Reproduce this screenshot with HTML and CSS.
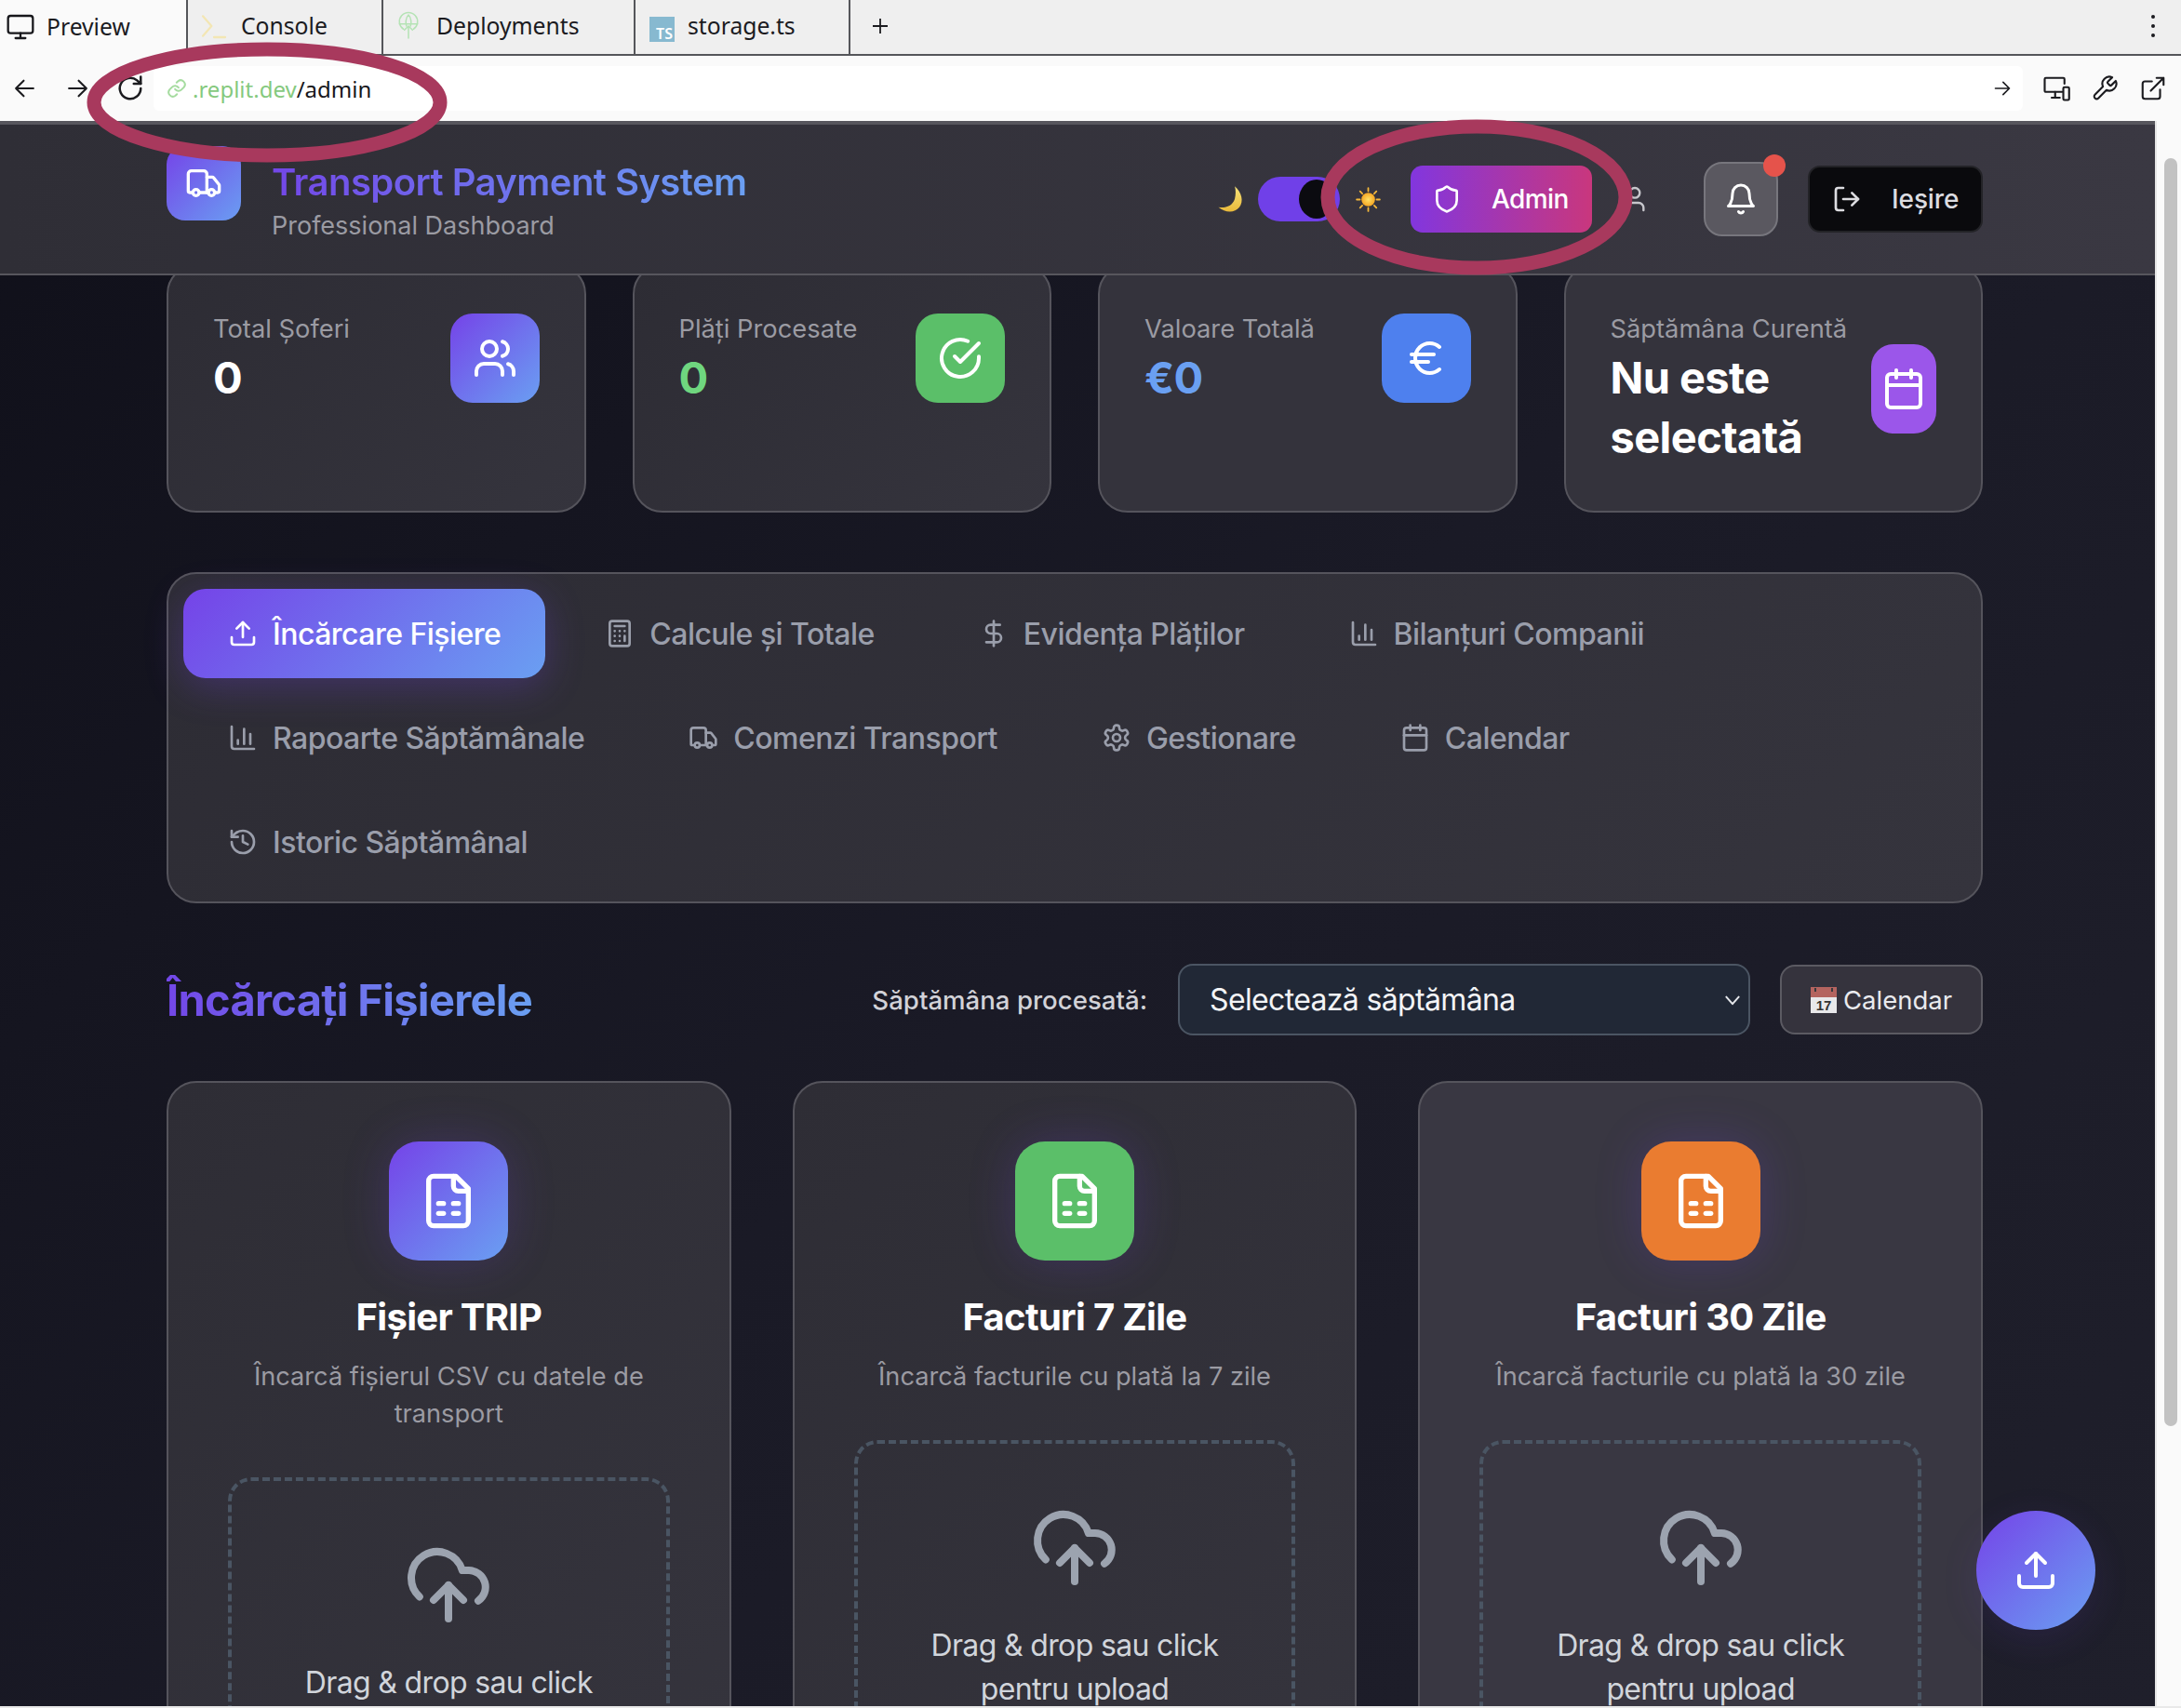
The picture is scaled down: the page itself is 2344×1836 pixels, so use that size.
FILE: index.html
```html
<!DOCTYPE html>
<html lang="ro">
<head>
<meta charset="utf-8">
<title>Transport Payment System</title>
<link rel="stylesheet" href="styles.css">
</head>
<body>
<svg class="sprite" width="0" height="0" aria-hidden="true">
  <symbol id="i-truck" viewBox="0 0 24 24"><path d="M14 18V6a2 2 0 0 0-2-2H4a2 2 0 0 0-2 2v11a1 1 0 0 0 1 1h2"/><path d="M15 18H9"/><path d="M19 18h2a1 1 0 0 0 1-1v-3.65a1 1 0 0 0-.22-.624l-3.48-4.35A1 1 0 0 0 17.52 8H14"/><circle cx="17" cy="18" r="2"/><circle cx="7" cy="18" r="2"/></symbol>
  <symbol id="i-upload" viewBox="0 0 24 24"><path d="M21 15v4a2 2 0 0 1-2 2H5a2 2 0 0 1-2-2v-4"/><polyline points="17 8 12 3 7 8"/><line x1="12" y1="3" x2="12" y2="15"/></symbol>
  <symbol id="i-calc" viewBox="0 0 24 24"><rect x="4" y="2" width="16" height="20" rx="2"/><line x1="8" y1="6" x2="16" y2="6"/><line x1="16" y1="14" x2="16" y2="18"/><path d="M16 10h.01M12 10h.01M8 10h.01M12 14h.01M8 14h.01M12 18h.01M8 18h.01"/></symbol>
  <symbol id="i-dollar" viewBox="0 0 24 24"><line x1="12" y1="2" x2="12" y2="22"/><path d="M17 5H9.5a3.5 3.5 0 0 0 0 7h5a3.5 3.5 0 0 1 0 7H6"/></symbol>
  <symbol id="i-chart" viewBox="0 0 24 24"><path d="M3 3v16a2 2 0 0 0 2 2h16"/><path d="M18 17V9"/><path d="M13 17V5"/><path d="M8 17v-3"/></symbol>
  <symbol id="i-gear" viewBox="0 0 24 24"><path d="M12.22 2h-.44a2 2 0 0 0-2 2v.18a2 2 0 0 1-1 1.73l-.43.25a2 2 0 0 1-2 0l-.15-.08a2 2 0 0 0-2.73.73l-.22.38a2 2 0 0 0 .73 2.73l.15.1a2 2 0 0 1 1 1.72v.51a2 2 0 0 1-1 1.74l-.15.09a2 2 0 0 0-.73 2.73l.22.38a2 2 0 0 0 2.73.73l.15-.08a2 2 0 0 1 2 0l.43.25a2 2 0 0 1 1 1.73V20a2 2 0 0 0 2 2h.44a2 2 0 0 0 2-2v-.18a2 2 0 0 1 1-1.73l.43-.25a2 2 0 0 1 2 0l.15.08a2 2 0 0 0 2.73-.73l.22-.39a2 2 0 0 0-.73-2.73l-.15-.08a2 2 0 0 1-1-1.74v-.5a2 2 0 0 1 1-1.74l.15-.09a2 2 0 0 0 .73-2.73l-.22-.38a2 2 0 0 0-2.73-.73l-.15.08a2 2 0 0 1-2 0l-.43-.25a2 2 0 0 1-1-1.73V4a2 2 0 0 0-2-2z"/><circle cx="12" cy="12" r="3"/></symbol>
  <symbol id="i-cal" viewBox="0 0 24 24"><path d="M8 2v4"/><path d="M16 2v4"/><rect x="3" y="4" width="18" height="18" rx="2"/><path d="M3 10h18"/></symbol>
  <symbol id="i-history" viewBox="0 0 24 24"><path d="M3 12a9 9 0 1 0 9-9 9.75 9.75 0 0 0-6.74 2.74L3 8"/><path d="M3 3v5h5"/><path d="M12 7v5l4 2"/></symbol>
  <symbol id="i-file" viewBox="0 0 24 24"><path d="M15 2H6a2 2 0 0 0-2 2v16a2 2 0 0 0 2 2h12a2 2 0 0 0 2-2V7Z"/><path d="M14 2v4a2 2 0 0 0 2 2h4"/><path d="M8 13h2"/><path d="M14 13h2"/><path d="M8 17h2"/><path d="M14 17h2"/></symbol>
  <symbol id="i-cloud" viewBox="0 0 24 24"><path d="M4.2 15.1A7 7 0 1 1 15.71 8h1.79a4.5 4.5 0 0 1 2.5 8.2"/><path d="M12 12v9"/><path d="m16 16-4-4-4 4"/></symbol>
</svg>

<div class="tabbar">
  <div class="tab tab-active">
    <svg class="tab-ico" viewBox="0 0 24 24"><rect x="2" y="3" width="20" height="14" rx="2"/><path d="M8 21h8M12 17v4"/></svg>
    <span>Preview</span>
  </div>
  <div class="tab tab-console">
    <svg class="tab-ico ico-pale-y" viewBox="0 0 24 24"><path d="m3 4 7 8-7 8"/><path d="M12 21h9"/></svg>
    <span>Console</span>
  </div>
  <div class="tab tab-deploy">
    <svg class="tab-ico ico-pale-g" viewBox="0 0 24 24"><path d="M7 15a9 9 0 1 1 10 0"/><path d="M3 10h18M12 1c-3 3-3 8-2 11M12 1c3 3 3 8 2 11"/><path d="M12 24V12M8 16l4-4 4 4"/></svg>
    <span>Deployments</span>
  </div>
  <div class="tab tab-storage">
    <span class="ts-badge">TS</span>
    <span>storage.ts</span>
  </div>
  <div class="tab-plus">
    <svg class="plus-ico" viewBox="0 0 24 24"><path d="M12 4v16M4 12h16"/></svg>
  </div>
  <div class="tab-spacer"></div>
  <div class="tab-more"><i></i><i></i><i></i></div>
</div>

<div class="addrbar">
  <svg class="nav-ico" viewBox="0 0 24 24"><path d="M21 12H3M11 4l-8 8 8 8"/></svg>
  <svg class="nav-ico" viewBox="0 0 24 24"><path d="M3 12h18M13 4l8 8-8 8"/></svg>
  <svg class="nav-ico nav-reload" viewBox="0 0 24 24"><path d="M21 12a9 9 0 1 1-3.2-6.9L21 8"/><path d="M21 2v6h-6"/></svg>
  <div class="urlfield">
    <svg class="link-ico" viewBox="0 0 24 24"><path d="M10 13a5 5 0 0 0 7.5.5l3-3a5 5 0 0 0-7-7l-1.700 1.700"/><path d="M14 11a5 5 0 0 0-7.500-.5l-3 3a5 5 0 0 0 7 7l1.700-1.700"/></svg>
    <span class="url"><span class="url-host">.replit.dev</span>/admin</span>
    <span class="url-spacer"></span>
    <svg class="go-ico" viewBox="0 0 24 24"><path d="M3 12h18M13 4l8 8-8 8"/></svg>
  </div>
  <svg class="tool-ico" viewBox="0 0 24 24"><path d="M17 15H3a1 1 0 0 1-1-1V4a1 1 0 0 1 1-1h15a1 1 0 0 1 1 1v4"/><path d="M8 20h7M11 15v5"/><rect x="18" y="11" width="5" height="11" rx="1"/></svg>
  <svg class="tool-ico" viewBox="0 0 24 24"><path d="M14.700 6.300a1 1 0 0 0 0 1.400l1.600 1.600a1 1 0 0 0 1.400 0l3.770-3.770a6 6 0 0 1-7.940 7.940l-6.910 6.910a2.120 2.120 0 0 1-3-3l6.910-6.910a6 6 0 0 1 7.940-7.940l-3.760 3.760z"/></svg>
  <svg class="tool-ico" viewBox="0 0 24 24"><path d="M18 13v6a2 2 0 0 1-2 2H5a2 2 0 0 1-2-2V8a2 2 0 0 1 2-2h6"/><path d="M15 3h6v6M10 14 21 3"/></svg>
</div>

<div class="app">
  <div class="page">
    <header class="head">
      <div class="brand">
        <div class="logo"><svg class="lu lu-logo"><use href="#i-truck"/></svg></div>
        <div class="brand-text">
          <div class="brand-title">Transport Payment System</div>
          <div class="brand-sub">Professional Dashboard</div>
        </div>
      </div>
      <div class="head-actions">
        <svg class="moon" viewBox="0 0 24 24"><defs><linearGradient id="mg" x1="0" y1="0" x2="0" y2="1"><stop offset="0" stop-color="#f7e27a"/><stop offset="1" stop-color="#e9b93a"/></linearGradient></defs><path d="M16 1C22 6 24 14 20 19C16 24 8 24 2 19C8 20 14 18 16 12C17 8 17 4 16 1Z" fill="url(#mg)"/></svg>
        <div class="toggle"><span class="knob"></span></div>
        <svg class="sun" viewBox="0 0 24 24"><defs><radialGradient id="sg"><stop offset="0" stop-color="#ffe066"/><stop offset="1" stop-color="#f5a623"/></radialGradient></defs><circle cx="12" cy="12" r="6.500" fill="url(#sg)"/><path d="M12 1v3M12 20v3M1 12h3M20 12h3M4.200 4.200l2.100 2.100M17.700 17.700l2.100 2.100M4.200 19.800l2.100-2.100M17.700 6.300l2.100-2.100" stroke="#f5b83a" stroke-width="1.600" stroke-linecap="round"/></svg>
        <button class="btn-admin">
          <svg class="lu lu-btn" viewBox="0 0 24 24"><path d="M20 13c0 5-3.500 7.500-7.660 8.950a1 1 0 0 1-.67-.01C7.500 20.500 4 18 4 13V6a1 1 0 0 1 1-1c2 0 4.500-1.200 6.240-2.720a1.170 1.170 0 0 1 1.520 0C14.510 3.810 17 5 19 5a1 1 0 0 1 1 1z"/></svg>
          <span>Admin</span>
        </button>
        <svg class="lu lu-user" viewBox="0 0 24 24"><path d="M19 21v-2a4 4 0 0 0-4-4H9a4 4 0 0 0-4 4v2"/><circle cx="12" cy="7" r="4"/></svg>
        <div class="bell">
          <svg class="lu lu-bell" viewBox="0 0 24 24"><path d="M6 8a6 6 0 0 1 12 0c0 7 3 9 3 9H3s3-2 3-9"/><path d="M10.300 21a1.940 1.940 0 0 0 3.400 0"/></svg>
          <span class="bell-dot"></span>
        </div>
        <button class="btn-exit">
          <svg class="lu lu-btn" viewBox="0 0 24 24"><path d="M9 21H5a2 2 0 0 1-2-2V5a2 2 0 0 1 2-2h4"/><polyline points="16 17 21 12 16 7"/><line x1="21" y1="12" x2="9" y2="12"/></svg>
          <span>Ieșire</span>
        </button>
      </div>
    </header>

    <main class="content">
      <section class="stats">
        <div class="stat">
          <div class="stat-text"><div class="stat-label">Total Șoferi</div><div class="stat-value">0</div></div>
          <div class="stat-ico grad-brand"><svg class="lu lu-stat" viewBox="0 0 24 24"><path d="M16 21v-2a4 4 0 0 0-4-4H6a4 4 0 0 0-4 4v2"/><circle cx="9" cy="7" r="4"/><path d="M22 21v-2a4 4 0 0 0-3-3.870"/><path d="M16 3.130a4 4 0 0 1 0 7.750"/></svg></div>
        </div>
        <div class="stat">
          <div class="stat-text"><div class="stat-label">Plăți Procesate</div><div class="stat-value val-green">0</div></div>
          <div class="stat-ico bg-green"><svg class="lu lu-stat" viewBox="0 0 24 24"><path d="M22 11.080V12a10 10 0 1 1-5.930-9.140"/><path d="m9 11 3 3L22 4"/></svg></div>
        </div>
        <div class="stat">
          <div class="stat-text"><div class="stat-label">Valoare Totală</div><div class="stat-value val-blue">€0</div></div>
          <div class="stat-ico bg-blue"><svg class="lu lu-stat" viewBox="0 0 24 24"><path d="M4 10h12"/><path d="M4 14h9"/><path d="M19 6a7.700 7.700 0 0 0-5.200-2A7.900 7.900 0 0 0 6 12c0 4.400 3.500 8 7.800 8 2 0 3.800-.8 5.200-2"/></svg></div>
        </div>
        <div class="stat">
          <div class="stat-text"><div class="stat-label">Săptămâna Curentă</div><div class="stat-value">Nu este selectată</div></div>
          <div class="stat-ico bg-purple"><svg class="lu lu-stat"><use href="#i-cal"/></svg></div>
        </div>
      </section>

      <nav class="tabs">
        <a class="navtab navtab-active"><svg class="lu lu-nav"><use href="#i-upload"/></svg><span class="navtxt">Încărcare Fișiere</span></a>
        <a class="navtab"><svg class="lu lu-nav"><use href="#i-calc"/></svg><span class="navtxt">Calcule și Totale</span></a>
        <a class="navtab"><svg class="lu lu-nav"><use href="#i-dollar"/></svg><span class="navtxt">Evidența Plăților</span></a>
        <a class="navtab"><svg class="lu lu-nav"><use href="#i-chart"/></svg><span class="navtxt">Bilanțuri Companii</span></a>
        <a class="navtab"><svg class="lu lu-nav"><use href="#i-chart"/></svg><span class="navtxt">Rapoarte Săptămânale</span></a>
        <a class="navtab"><svg class="lu lu-nav"><use href="#i-truck"/></svg><span class="navtxt">Comenzi Transport</span></a>
        <a class="navtab"><svg class="lu lu-nav"><use href="#i-gear"/></svg><span class="navtxt">Gestionare</span></a>
        <a class="navtab"><svg class="lu lu-nav"><use href="#i-cal"/></svg><span class="navtxt">Calendar</span></a>
        <a class="navtab"><svg class="lu lu-nav"><use href="#i-history"/></svg><span class="navtxt">Istoric Săptămânal</span></a>
      </nav>

      <section class="sec-head">
        <h2 class="sec-title">Încărcați Fișierele</h2>
        <div class="sec-spacer"></div>
        <span class="sec-label">Săptămâna procesată:</span>
        <div class="select"><span>Selectează săptămâna</span><svg class="chev" viewBox="0 0 24 24"><path d="m4 8 8 9 8-9"/></svg></div>
        <button class="btn-cal">
          <svg class="emoji-cal" viewBox="0 0 28 28"><rect x="0" y="0" width="28" height="28" fill="#e8e8ea"/><rect x="0" y="0" width="28" height="11" fill="#b4645f"/><path d="M5 1v4M23 1v4" stroke="#3a3a3e" stroke-width="2"/><text x="14" y="25" text-anchor="middle" class="emoji-cal-num">17</text></svg>
          <span>Calendar</span>
        </button>
      </section>

      <section class="uploads">
        <article class="ucard">
          <div class="uico grad-brand uglow"><svg class="lu lu-file"><use href="#i-file"/></svg></div>
          <h3 class="utitle">Fișier TRIP</h3>
          <p class="udesc">Încarcă fișierul CSV cu datele de transport</p>
          <div class="drop"><svg class="lu lu-cloud"><use href="#i-cloud"/></svg><div class="droptxt">Drag &amp; drop sau click<br>pentru upload</div></div>
        </article>
        <article class="ucard">
          <div class="uico bg-green uglow"><svg class="lu lu-file"><use href="#i-file"/></svg></div>
          <h3 class="utitle">Facturi 7 Zile</h3>
          <p class="udesc">Încarcă facturile cu plată la 7 zile</p>
          <div class="drop"><svg class="lu lu-cloud"><use href="#i-cloud"/></svg><div class="droptxt">Drag &amp; drop sau click<br>pentru upload</div></div>
        </article>
        <article class="ucard">
          <div class="uico bg-orange uglow"><svg class="lu lu-file"><use href="#i-file"/></svg></div>
          <h3 class="utitle">Facturi 30 Zile</h3>
          <p class="udesc">Încarcă facturile cu plată la 30 zile</p>
          <div class="drop"><svg class="lu lu-cloud"><use href="#i-cloud"/></svg><div class="droptxt">Drag &amp; drop sau click<br>pentru upload</div></div>
        </article>
      </section>
    </main>

    <div class="fab"><svg class="lu lu-fab"><use href="#i-upload"/></svg></div>
  </div>
  <div class="scrollbar"><div class="thumb"></div></div>
</div>
<div class="bottom-strip"></div>

<svg class="marks" viewBox="0 0 2344 1836" aria-hidden="true">
  <ellipse cx="287" cy="110" rx="186" ry="57"/>
  <ellipse cx="1587" cy="212" rx="160" ry="76"/>
</svg>
</body>
</html>
```

FILE: styles.css
```css
* { box-sizing: border-box; }
html, body { margin: 0; height: 100%; }
body {
  width: 2344px; height: 1836px; overflow: hidden; position: relative;
  display: flex; flex-direction: column;
  font-family: "Inter", "Liberation Sans", sans-serif; background: #fff;
}
.sprite { position: absolute; }
.lu { fill: none; stroke: currentColor; stroke-width: 2; stroke-linecap: round; stroke-linejoin: round; flex: none; display: block; }

/* IDE tab bar */
.tabbar { height: 60px; flex: none; display: flex; align-items: stretch; background: #efefef; border-bottom: 2px solid #55565a; font-family: "Noto Sans", sans-serif; font-size: 24.700px; line-height: 54px; color: #1b1b1f; }
.tab { display: flex; align-items: center; border-right: 2px solid #55565a; gap: 16px; padding-bottom: 2px; }
.tab-active { width: 202px; background: #fafafa; padding-left: 6px; margin-bottom: -2px; gap: 12px; }
.tab-console { width: 210px; padding-left: 12px; gap: 13px; }
.tab-deploy { width: 271px; padding-left: 14px; gap: 17px; }
.tab-storage { width: 231px; padding-left: 15px; gap: 14px; }
.tab-ico { width: 32px; height: 34px; fill: none; stroke: #17171b; stroke-width: 1.700; stroke-linecap: round; stroke-linejoin: round; flex: none; }
.ico-pale-y { stroke: #f3e6b4; }
.ico-pale-g { stroke: #b5e3b5; height: 58px; width: 26px; stroke-width: 1.400; }
.ts-badge { width: 27px; height: 27px; margin-top: 6px; background: #87b9d0; color: #fff; font-size: 16px; font-weight: 600; display: flex; align-items: flex-end; justify-content: flex-end; padding-right: 2px; line-height: 18px; }
.tab-plus { width: 60px; display: flex; align-items: center; justify-content: center; margin-left: 2px; padding-bottom: 2px; }
.plus-ico { width: 24px; height: 24px; fill: none; stroke: #1b1b1f; stroke-width: 1.800; }
.tab-spacer { flex: 1; }
.tab-more { width: 28px; margin-right: 16px; display: flex; flex-direction: column; align-items: center; justify-content: center; gap: 6px; padding-bottom: 2px; }
.tab-more i { width: 4px; height: 4px; border-radius: 50%; background: #1b1b1f; }

/* Address bar */
.addrbar { height: 70px; flex: none; display: flex; align-items: center; background: #fafafa; padding: 0 14px 0 14px; }
.nav-ico { width: 25px; height: 28px; fill: none; stroke: #1b1b1f; stroke-width: 2; stroke-linecap: round; stroke-linejoin: round; margin-right: 32px; flex: none; }
.nav-reload { width: 30px; height: 30px; margin-right: 10px; margin-left: -3px; }
.urlfield { flex: 1; height: 48px; background: #fff; border-radius: 6px; display: flex; align-items: center; padding: 0 12px 0 14px; font-family: "Noto Sans", sans-serif; font-size: 24px; color: #17171b; }
.link-ico { width: 22px; height: 24px; fill: none; stroke: #a6dca0; stroke-width: 2.200; stroke-linecap: round; margin-right: 6px; flex: none; }
.url-host { color: #85c97e; }
.url-spacer { flex: 1; }
.go-ico { width: 20px; height: 24px; fill: none; stroke: #1b1b1f; stroke-width: 2; stroke-linecap: round; stroke-linejoin: round; }
.tool-ico { width: 32px; height: 30px; fill: none; stroke: #1b1b1f; stroke-width: 1.700; stroke-linecap: round; stroke-linejoin: round; margin-left: 20px; flex: none; }

/* App frame */
.app { flex: 1; display: flex; min-height: 0; }
.page { flex: 1; position: relative; overflow: hidden; min-width: 0; background: linear-gradient(135deg, #10101a 0%, #1a1a26 50%, #1f1f2b 100%); }
.scrollbar { width: 28px; flex: none; background: #fafafa; border-left: 2px solid #e6e6e6; padding: 40px 4px 0 8px; }
.thumb { height: 1363px; background: #c2c2c2; border-radius: 8px; }
.bottom-strip { height: 2px; flex: none; background: #e9e9e9; }

/* Header */
.head { position: relative; z-index: 5; height: 166px; background: linear-gradient(90deg, #2f2e36, #3a3842); border-top: 4px solid #57565d; border-bottom: 2px solid #57565d; display: flex; align-items: center; justify-content: space-between; padding: 0 185px 0 179px; }
.brand { display: flex; align-items: flex-start; gap: 33px; margin-bottom: 9px; }
.logo { width: 80px; height: 80px; border-radius: 20px; background: linear-gradient(135deg, #7543e8, #6a9df2); display: flex; align-items: center; justify-content: center; color: #fff; }
.lu-logo { width: 40px; height: 40px; }
.brand-text { padding-top: 15px; }
.brand-title { font-size: 40px; font-weight: 600; line-height: 48px; letter-spacing: -0.55px; background: linear-gradient(90deg, #7347e8, #6a9ff2); -webkit-background-clip: text; background-clip: text; color: transparent; white-space: nowrap; }
.brand-sub { font-size: 27px; line-height: 40px; color: #9b9ba3; margin-top: 3px; white-space: nowrap; }
.head-actions { display: flex; align-items: center; }
.moon { width: 30px; height: 32px; margin-right: 15px; }
.toggle { width: 88px; height: 48px; border-radius: 24px; background: #7040e8; position: relative; margin-right: 17px; }
.knob { position: absolute; right: 6px; top: 3px; width: 38px; height: 42px; border-radius: 50%; background: #0b0b10; }
.sun { width: 27px; height: 27px; margin-right: 32px; }
.btn-admin { width: 195px; height: 72px; border: 0; border-radius: 13px; background: linear-gradient(90deg, #8236de, #c9377d); color: #fff; font: 500 28px "Inter", sans-serif; letter-spacing: -.6px; display: flex; align-items: center; padding: 0 0 0 23px; gap: 32px; }
.lu-btn { width: 32px; height: 32px; }
.lu-user { width: 32px; height: 32px; color: #c7c7cc; margin-left: 30px; stroke-width: 1.800; }
.bell { width: 80px; height: 80px; border-radius: 20px; background: #5a5860; border: 2px solid #77767d; margin-left: 58px; display: flex; align-items: center; justify-content: center; color: #fff; position: relative; }
.lu-bell { width: 36px; height: 36px; }
.bell-dot { position: absolute; top: -10px; right: -10px; width: 24px; height: 24px; border-radius: 50%; background: #e5534b; }
.btn-exit { width: 188px; height: 72px; margin-left: 32px; border-radius: 13px; border: 2px solid #232327; background: #0a0a0d; color: #dcdce0; font: 500 28px "Inter", sans-serif; letter-spacing: -.1px; display: flex; align-items: center; padding: 0 0 0 24px; gap: 32px; }

/* Content */
.content { padding: 0 185px 0 179px; margin-top: -12px; display: flex; flex-direction: column; }
.stats { display: grid; grid-template-columns: repeat(4, 1fr); gap: 50px; }
.stat { height: 267px; padding: 48px; border-radius: 32px; border: 2px solid #55545c; background: linear-gradient(135deg, #2d2c34, #35343d); display: flex; align-items: flex-start; gap: 16px; }
.stat:nth-child(n+3) { background: #34333c; }
.stat:last-child { align-items: center; }
.stat-text { flex: 1; min-width: 0; }
.stat-label { font-size: 27.300px; line-height: 40px; color: #9b9ba3; white-space: nowrap; }
.stat-value { font-size: 47px; font-weight: 700; line-height: 64px; letter-spacing: -.6px; color: #fff; }
.val-green { color: #6fd67f; }
.val-blue { color: #6aa0f2; }
.stat-ico { width: 96px; height: 96px; flex-shrink: 1; border-radius: 24px; display: flex; align-items: center; justify-content: center; color: #fff; margin-top: 3px; }
.stat:last-child .stat-ico { margin-top: 0; width: 70px; flex-shrink: 0; }
.lu-stat { width: 48px; height: 48px; stroke-width: 2; }
.grad-brand { background: linear-gradient(135deg, #7543e8, #6a9ff2); }
.bg-green { background: #5bbf69; }
.bg-blue { background: #4e80ee; }
.bg-purple { background: #9b56ea; }
.bg-orange { background: #ea7c30; }

/* Nav tabs */
.tabs { margin-top: 64px; min-height: 355px; padding: 16px; border: 2px solid #55545c; border-radius: 32px; background: linear-gradient(135deg, #2d2c34, #35343d); display: flex; flex-wrap: wrap; gap: 16px; align-content: flex-start; }
.navtab { height: 96px; display: flex; align-items: center; gap: 16px; padding: 0 48px; font-size: 32px; line-height: 48px; font-weight: 500; letter-spacing: -.53px; color: #9a9eab; white-space: nowrap; border-radius: 24px; }
.navtxt { padding-top: 2px; }
.navtab-active { color: #fff; background: linear-gradient(135deg, #7543e8, #6a9ff2); box-shadow: 0 10px 40px rgba(117, 67, 232, .28); }
.lu-nav { width: 32px; height: 32px; }

/* Section head */
.sec-head { margin-top: 65px; height: 77px; display: flex; align-items: center; }
.sec-title { margin: 0; font-size: 47px; font-weight: 700; line-height: 64px; letter-spacing: -.7px; background: linear-gradient(90deg, #7347e8, #6a9ff2); -webkit-background-clip: text; background-clip: text; color: transparent; white-space: nowrap; }
.sec-spacer { flex: 1; }
.sec-label { font-size: 27.600px; font-weight: 500; color: #d2d2d8; margin-right: 33px; white-space: nowrap; }
.select { width: 615px; height: 77px; border-radius: 16px; background: #212836; border: 2px solid #4b5563; color: #f3f4f6; font-size: 32px; letter-spacing: -.65px; display: flex; align-items: center; justify-content: space-between; padding: 0 2px 0 32px; }
.chev { width: 20px; height: 20px; fill: none; stroke: #e5e7eb; stroke-width: 2.400; stroke-linecap: round; stroke-linejoin: round; margin-right: 5px; }
.btn-cal { width: 218px; height: 75px; margin-left: 32px; border-radius: 16px; border: 2px solid #5b5a62; background: #35333d; color: #e9eaee; font: 400 27.500px "Inter", sans-serif; display: flex; align-items: center; justify-content: center; gap: 7px; padding: 0; }
.emoji-cal { width: 28px; height: 28px; flex: none; }
.emoji-cal-num { font: 700 15px "Liberation Sans", sans-serif; fill: #333; }

/* Upload cards */
.uploads { margin-top: 49px; display: grid; grid-template-columns: repeat(3, 1fr); gap: 66px; align-items: start; }
.ucard { padding: 63px 64px 0; border: 2px solid #55545c; border-radius: 32px; background: linear-gradient(135deg, #2e2d35, #35343d); display: flex; flex-direction: column; align-items: center; text-align: center; height: 800px; }
.uploads .ucard:nth-child(3) { background: #393742; }
.uico { width: 128px; height: 128px; flex: none; border-radius: 32px; display: flex; align-items: center; justify-content: center; color: #fff; }
.uglow { box-shadow: 0 0 50px rgba(117, 67, 232, .22); }
.lu-file { width: 64px; height: 64px; }
.utitle { margin: 33px 0 0; font-size: 40px; font-weight: 700; line-height: 56px; letter-spacing: -.7px; color: #fff; white-space: nowrap; }
.udesc { margin: 16px 0 0; font-size: 27.200px; line-height: 40px; color: #9b9ba3; }
.drop { align-self: stretch; flex: none; margin-top: 48px; height: 500px; border: 4px dashed #4a5563; border-radius: 25px; padding-top: 64px; display: flex; flex-direction: column; align-items: center; color: #9ca3af; }
.lu-cloud { width: 96px; height: 96px; }
.droptxt { margin-top: 33px; font-size: 32px; line-height: 47px; letter-spacing: -.65px; color: #d1d5db; }

/* FAB */
.fab { position: absolute; left: 2124px; top: 1494px; width: 128px; height: 128px; border-radius: 50%; background: linear-gradient(135deg, #7543e8, #6a9ff2); display: flex; align-items: center; justify-content: center; color: #fff; box-shadow: 0 10px 40px rgba(117, 67, 232, .12); z-index: 6; }
.lu-fab { width: 48px; height: 48px; }

/* Annotation marks */
.marks { position: absolute; left: 0; top: 0; width: 2344px; height: 1836px; pointer-events: none; z-index: 10; }
.marks ellipse { fill: none; stroke: #a8395d; stroke-width: 15; }
```
